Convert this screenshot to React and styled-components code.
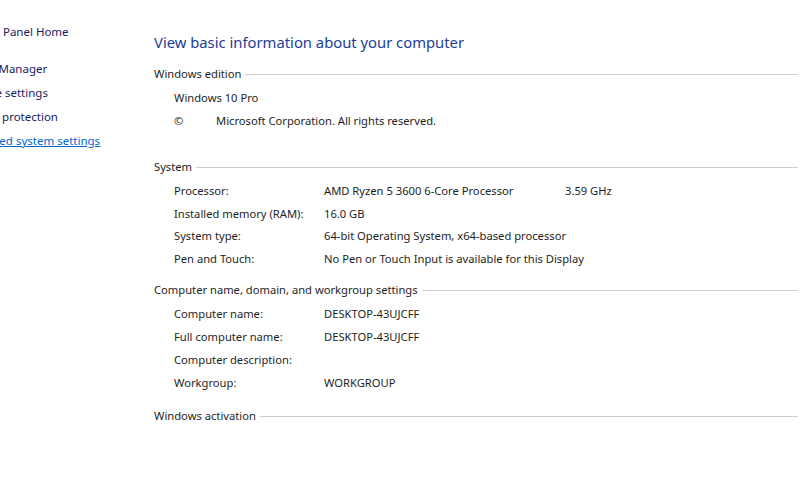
import React from "react";
import styled, { createGlobalStyle } from "styled-components";

const Global = createGlobalStyle`
  html, body { margin: 0; padding: 0; background: #fff; }
  body { font-family: "Noto Sans", "Open Sans", sans-serif; font-size: 11.2px; color: #000; }
  * { box-sizing: border-box; }
`;

const Page = styled.div`
  display: flex;
  width: 800px;
  height: 483px;
  overflow: hidden;
  background: #fff;
`;

const Nav = styled.nav`
  width: 154px;
  flex: none;
  display: flex;
  flex-direction: column;
  padding-top: 24px;
  margin-left: -40px;
  font-size: 11.5px;
`;

const NavLink = styled.a`
  display: block;
  height: 24px;
  line-height: 16px;
  white-space: nowrap;
  color: ${(p) => (p.$active ? "#0066cc" : "#1a1a62")};
  text-decoration: ${(p) => (p.$active ? "underline" : "none")};
  margin-bottom: ${(p) => (p.$gap ? 13 : 0)}px;
`;

const Main = styled.main`
  flex: 1;
  padding-top: 31px;
  padding-right: 2px;
  padding-left: 40px;
  display: flex;
  flex-direction: column;
`;

const Title = styled.h1`
  margin: 0 0 12px 0;
  font-size: 14.8px;
  font-weight: 400;
  line-height: 22px;
  color: #1e3c96;
`;

const Section = styled.section`
  display: flex;
  flex-direction: column;
  margin-bottom: ${(p) => p.$gap || 0}px;
`;

const SectionHead = styled.div`
  display: flex;
  align-items: center;
  gap: 4px;
  height: 18px;
  line-height: 18px;
  color: #1e1e1e;
  margin-bottom: 5px;
  &::after {
    content: "";
    flex: 1;
    height: 1px;
    background: #cfcfcf;
  }
`;

const Rows = styled.div`
  display: flex;
  flex-direction: column;
  padding-left: 20px;
`;

const Row = styled.div`
  display: grid;
  grid-template-columns: 150px 241px auto;
  height: ${(p) => p.$h || 23}px;
  line-height: 20px;
  color: #1e1e1e;
  white-space: nowrap;
`;

const EditionRow = styled.div`
  display: grid;
  grid-template-columns: 42px auto;
  height: 23px;
  line-height: 20px;
  color: #1e1e1e;
  white-space: nowrap;
`;

const navItems = [
  { t: "Control Panel Home", gap: true },
  { t: "Device Manager" },
  { t: "Remote settings" },
  { t: "System protection" },
  { t: "Advanced system settings", active: true },
];

export default function App() {
  return (
    <>
      <Global />
      <Page>
        <Nav>
          {navItems.map((n) => (
            <NavLink key={n.t} href="#" $gap={n.gap} $active={n.active}>
              {n.t}
            </NavLink>
          ))}
        </Nav>
        <Main>
          <Title>View basic information about your computer</Title>
          <Section $gap={24}>
            <SectionHead>Windows edition</SectionHead>
            <Rows>
              <EditionRow><span>Windows 10 Pro</span><span /></EditionRow>
              <EditionRow><span>©</span><span>Microsoft Corporation. All rights reserved.</span></EditionRow>
            </Rows>
          </Section>
          <Section $gap={10}>
            <SectionHead>System</SectionHead>
            <Rows>
              <Row $h={22.5}><span>Processor:</span><span>AMD Ryzen 5 3600 6-Core Processor</span><span>3.59 GHz</span></Row>
              <Row $h={22.5}><span>Installed memory (RAM):</span><span>16.0 GB</span></Row>
              <Row $h={22.5}><span>System type:</span><span>64-bit Operating System, x64-based processor</span></Row>
              <Row $h={22.5}><span>Pen and Touch:</span><span>No Pen or Touch Input is available for this Display</span></Row>
            </Rows>
          </Section>
          <Section $gap={11}>
            <SectionHead>Computer name, domain, and workgroup settings</SectionHead>
            <Rows>
              <Row><span>Computer name:</span><span>DESKTOP-43UJCFF</span></Row>
              <Row><span>Full computer name:</span><span>DESKTOP-43UJCFF</span></Row>
              <Row><span>Computer description:</span><span /></Row>
              <Row><span>Workgroup:</span><span>WORKGROUP</span></Row>
            </Rows>
          </Section>
          <Section>
            <SectionHead>Windows activation</SectionHead>
          </Section>
        </Main>
      </Page>
    </>
  );
}
